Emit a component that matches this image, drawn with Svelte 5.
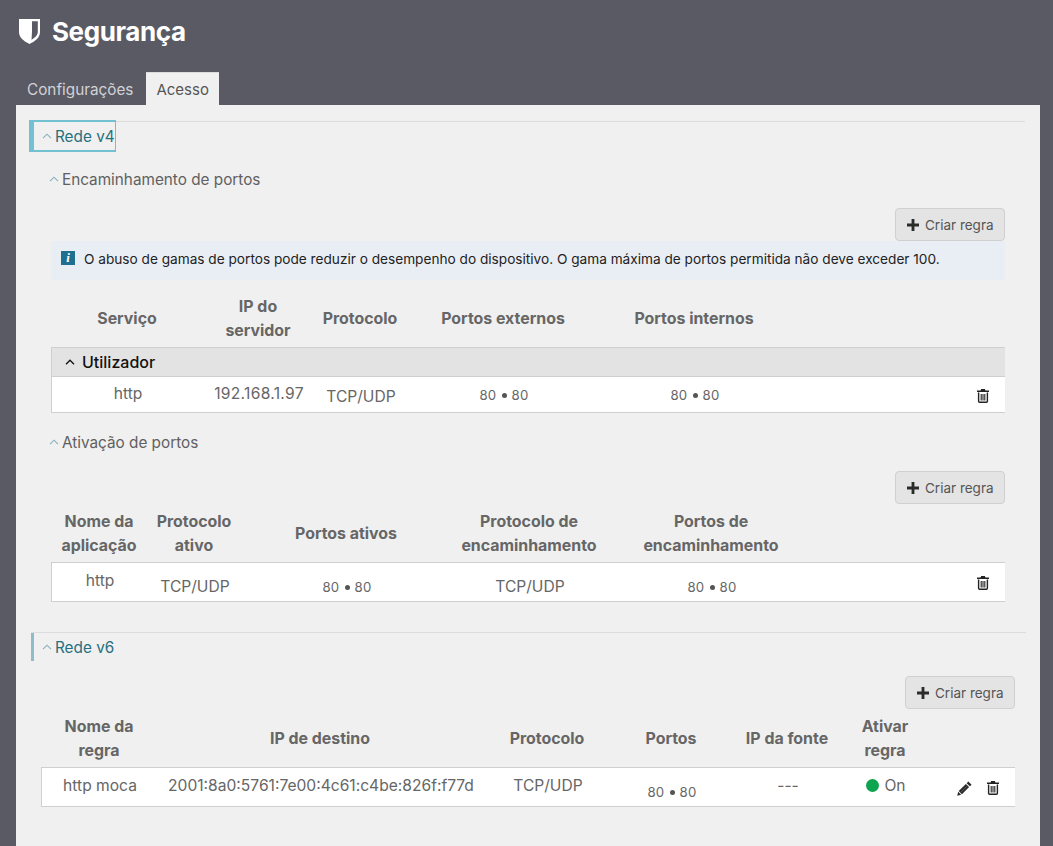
<script lang="ts">
	const forwardCols = '152px 110px 94px 192px 190px 1fr';
	const triggerCols = '96px 94px 210px 156px 208px 1fr';
	const v6Cols = '116px 326px 128px 120px 112px 84px 1fr';
</script>

{#snippet chevron()}
	<svg class="chevron" width="10" height="6" viewBox="0 0 10 6" fill="none" stroke="currentColor" stroke-width="1.100">
		<path d="M1 5.2 5 1.2l4 4" />
	</svg>
{/snippet}

{#snippet trash()}
	<svg class="tool" width="12" height="14" viewBox="0 0 12 14" aria-label="Eliminar">
		<path fill="#222" d="M4.2 0h3.6l.7 1.4H12v1.5H0V1.4h3.5z" />
		<path fill="none" stroke="#222" stroke-width="1.4" d="M1.6 3.4v8.9c0 .6.4 1 1 1h6.8c.6 0 1-.4 1-1V3.4" />
		<path fill="none" stroke="#222" stroke-width="1.1" d="M4.2 5v6.6M6 5v6.6M7.8 5v6.6" />
	</svg>
{/snippet}

{#snippet pencil()}
	<svg class="tool" width="15" height="15" viewBox="0 0 14 14" aria-label="Editar">
		<path fill="#2b2b2b" d="M10.6.4 13.6 3.400 12 5 9 2zM8.300 2.700 11.300 5.700 4.600 12.400 1.600 9.400zM1.100 10.100 3.900 12.900.2 13.800z" />
		<path fill="none" stroke="#8a8a8a" stroke-width=".5" d="M9.200 5 4 10.200" />
	</svg>
{/snippet}

{#snippet ports()}
	<span class="ports">80 <i></i> 80</span>
{/snippet}

{#snippet createButton()}
	<div class="actions">
		<button class="create" type="button">
			<svg width="12" height="12" viewBox="0 0 11 11"><path fill="#2b2b2b" d="M4.200 0h2.600v4.200H11v2.600H6.800V11H4.200V6.800H0V4.200h4.200z" /></svg>
			Criar regra
		</button>
	</div>
{/snippet}

<div class="page">
	<header class="title">
		<svg width="21" height="25" viewBox="0 0 21 25">
			<path fill="#fff" d="M0 0h21v13c0 5.500-4.500 9-10.500 12C4.500 22 0 18.500 0 13z" />
			<path fill="#5a5a64" d="M13 2.200h5.800v10.500c0 3.300-2.700 6-6.300 8l.5-8z" />
		</svg>
		<h1>Segurança</h1>
	</header>

	<nav class="tabs">
		<span class="tab">Configurações</span>
		<span class="tab active">Acesso</span>
	</nav>

	<main class="panel">
		<section class="net">
			<h2 class="net-title focused">{@render chevron()}Rede v4</h2>

			<div class="sub">
				<h3 class="sub-title">{@render chevron()}Encaminhamento de portos</h3>
				{@render createButton()}
				<div class="notice">
					<span class="info">i</span>
					<span>O abuso de gamas de portos pode reduzir o desempenho do dispositivo. O gama máxima de portos permitida não deve exceder 100.</span>
				</div>
				<div class="grid-head first" style="grid-template-columns: {forwardCols}">
					<span>Serviço</span>
					<span>IP do<br />servidor</span>
					<span>Protocolo</span>
					<span>Portos externos</span>
					<span>Portos internos</span>
				</div>
				<div class="body">
					<div class="group">
						<svg width="10" height="6" viewBox="0 0 10 6" fill="none" stroke="#111" stroke-width="1.300"><path d="M1 5.200 5 1.200l4 4" /></svg>
						Utilizador
					</div>
					<div class="row short" style="grid-template-columns: {forwardCols}">
						<span>http</span>
						<span class="server-ip">192.168.1.97</span>
						<span class="low">TCP/UDP</span>
						{@render ports()}
						{@render ports()}
						<span class="tools">{@render trash()}</span>
					</div>
				</div>
			</div>

			<div class="sub second">
				<h3 class="sub-title">{@render chevron()}Ativação de portos</h3>
				{@render createButton()}
				<div class="grid-head" style="grid-template-columns: {triggerCols}">
					<span>Nome da<br />aplicação</span>
					<span>Protocolo<br />ativo</span>
					<span>Portos ativos</span>
					<span>Protocolo de<br />encaminhamento</span>
					<span>Portos de<br />encaminhamento</span>
				</div>
				<div class="body">
					<div class="row" style="grid-template-columns: {triggerCols}">
						<span>http</span>
						<span class="low">TCP/UDP</span>
						{@render ports()}
						<span class="low">TCP/UDP</span>
						{@render ports()}
						<span class="tools">{@render trash()}</span>
					</div>
				</div>
			</div>
		</section>

		<section class="net v6">
			<h2 class="net-title">{@render chevron()}Rede v6</h2>

			<div class="sub wide">
				{@render createButton()}
				<div class="grid-head" style="grid-template-columns: {v6Cols}">
					<span>Nome da<br />regra</span>
					<span>IP de destino</span>
					<span>Protocolo</span>
					<span>Portos</span>
					<span>IP da fonte</span>
					<span>Ativar<br />regra</span>
				</div>
				<div class="body">
					<div class="row" style="grid-template-columns: {v6Cols}">
						<span>http moca</span>
						<span>2001:8a0:5761:7e00:4c61:c4be:826f:f77d</span>
						<span>TCP/UDP</span>
						{@render ports()}
						<span>---</span>
						<span class="state"><i></i>On</span>
						<span class="tools">{@render pencil()}{@render trash()}</span>
					</div>
				</div>
			</div>
		</section>
	</main>
</div>

<style>
	:global(body) {
		background: #5a5a64;
		font-family: Inter, 'Liberation Sans', sans-serif;
	}

	.page {
		height: 846px;
		overflow: hidden;
		display: flex;
		flex-direction: column;
	}

	.title {
		height: 72px;
		padding: 19px 0 0 19px;
		box-sizing: border-box;
		display: flex;
		align-items: flex-start;
		gap: 12px;
		color: #fff;
	}

	.title h1 {
		margin: 0;
		font-size: 26px;
		line-height: 26px;
		font-weight: 700;
		letter-spacing: -0.4px;
	}

	.tabs {
		display: flex;
		padding-left: 16px;
		height: 33px;
	}

	.tab {
		padding: 0 11px;
		line-height: 35px;
		font-size: 15.3px;
		color: #d2d2d6;
		white-space: nowrap;
	}

	.tab.active {
		padding: 0 10px;
		background: #f0f0f0;
		color: #555;
		margin-left: 2px;
		font-size: 15px;
		box-shadow: inset 0 1px 0 #dcdcdc;
	}

	.panel {
		flex: 1;
		margin: 0 13px 0 16px;
		background: #f0f0f0;
		padding-top: 16px;
		color: #5c5c5c;
	}

	.net {
		margin: 0 15px 0 14px;
		border-top: 1px solid #dcdcdc;
	}

	.net.v6 {
		margin: 30px 14px 0 15px;
	}

	.net-title {
		display: inline-flex;
		align-items: center;
		gap: 3px;
		box-sizing: border-box;
		height: 28px;
		margin: 0;
		padding-left: 8px;
		border-left: 3px solid #8fbccb;
		font-size: 15.3px;
		font-weight: 400;
		color: #25707f;
	}

	.net-title.focused {
		height: 32px;
		width: 87px;
		margin: -2px 0 -1px -1px;
		padding-left: 8px;
		border: 2px solid #72c1d2;
		border-left-width: 5px;
		border-right-width: 1px;
	}

	.chevron {
		color: #84b2bc;
		flex: none;
	}

	.sub {
		margin: 0 20px 0 21px;
	}

	.sub.wide {
		margin: 15px 11px 0 10px;
	}

	.sub.second {
		margin-top: 19px;
	}

	.sub-title {
		display: flex;
		align-items: center;
		gap: 3px;
		margin: 18px 0 0 -2px;
		height: 20px;
		font-size: 15.3px;
		font-weight: 400;
		color: #606060;
	}

	.actions {
		display: flex;
		justify-content: flex-end;
		margin-top: 19px;
	}

	.sub.wide .actions {
		margin-top: 0;
	}

	.create {
		display: flex;
		align-items: center;
		gap: 6px;
		box-sizing: border-box;
		width: 110px;
		height: 33px;
		padding: 0 0 0 11px;
		border: 1px solid #d0d0d0;
		border-radius: 4px;
		background: #e4e4e4;
		font: inherit;
		font-size: 13.5px;
		color: #555;
		white-space: nowrap;
	}

	.notice {
		display: flex;
		align-items: center;
		gap: 9px;
		height: 39px;
		padding: 0 0 3px 10px;
		box-sizing: border-box;
		background: #e9eef5;
		font-size: 13.65px;
		color: #222;
		white-space: nowrap;
	}

	.info {
		width: 14px;
		height: 14px;
		margin-top: -3px;
		background: #1f6f90;
		color: #fff;
		font: italic 700 13px/14px 'Liberation Serif', serif;
		text-align: center;
	}

	.grid-head {
		display: grid;
		align-content: center;
		height: 53px;
		margin-top: 5px;
		text-align: center;
		font-size: 15.9px;
		line-height: 24px;
		font-weight: 700;
		color: #666;
		padding-bottom: 4px;
		box-sizing: border-box;
	}

	.grid-head > span {
		align-self: center;
	}

	.grid-head.first {
		margin-top: 14px;
	}

	.body {
		border: 1px solid #cfcfcf;
		border-right: 0;
		background: #fff;
	}

	.group {
		display: flex;
		align-items: center;
		gap: 7px;
		height: 28px;
		padding-left: 13px;
		background: #e3e3e3;
		border-bottom: 1px solid #cfcfcf;
		font-size: 16px;
		font-weight: 500;
		color: #111;
	}

	.row {
		display: grid;
		align-items: center;
		height: 38px;
		text-align: center;
		font-size: 15.6px;
		color: #666;
		white-space: nowrap;
	}

	.row.short {
		height: 35px;
	}

	.row > span {
		margin-top: -3px;
	}

	.row > .server-ip {
		letter-spacing: 0.3px;
	}

	.row > .low {
		margin-top: 8px;
	}

	.row.short > .low {
		margin-top: 4px;
	}

	.row > .ports {
		margin-top: 9px;
	}

	.row.short > .ports {
		margin-top: 0;
	}

	.ports {
		font-size: 13.2px;
		letter-spacing: 0.3px;
	}

	.ports i {
		display: inline-block;
		width: 5px;
		height: 5px;
		margin: 0 1px 2px;
		border-radius: 50%;
		background: #555;
	}

	.state {
		display: flex;
		justify-content: center;
		align-items: center;
		gap: 5px;
	}

	.state i {
		width: 13px;
		height: 13px;
		border-radius: 50%;
		background: #0ea34f;
	}

	.row > .tools {
		display: flex;
		justify-content: flex-end;
		align-items: center;
		gap: 16px;
		margin-top: 2px;
		padding-right: 16px;
	}

	.sub.wide .row > .tools {
		padding-right: 16px;
		gap: 15px;
	}
</style>
